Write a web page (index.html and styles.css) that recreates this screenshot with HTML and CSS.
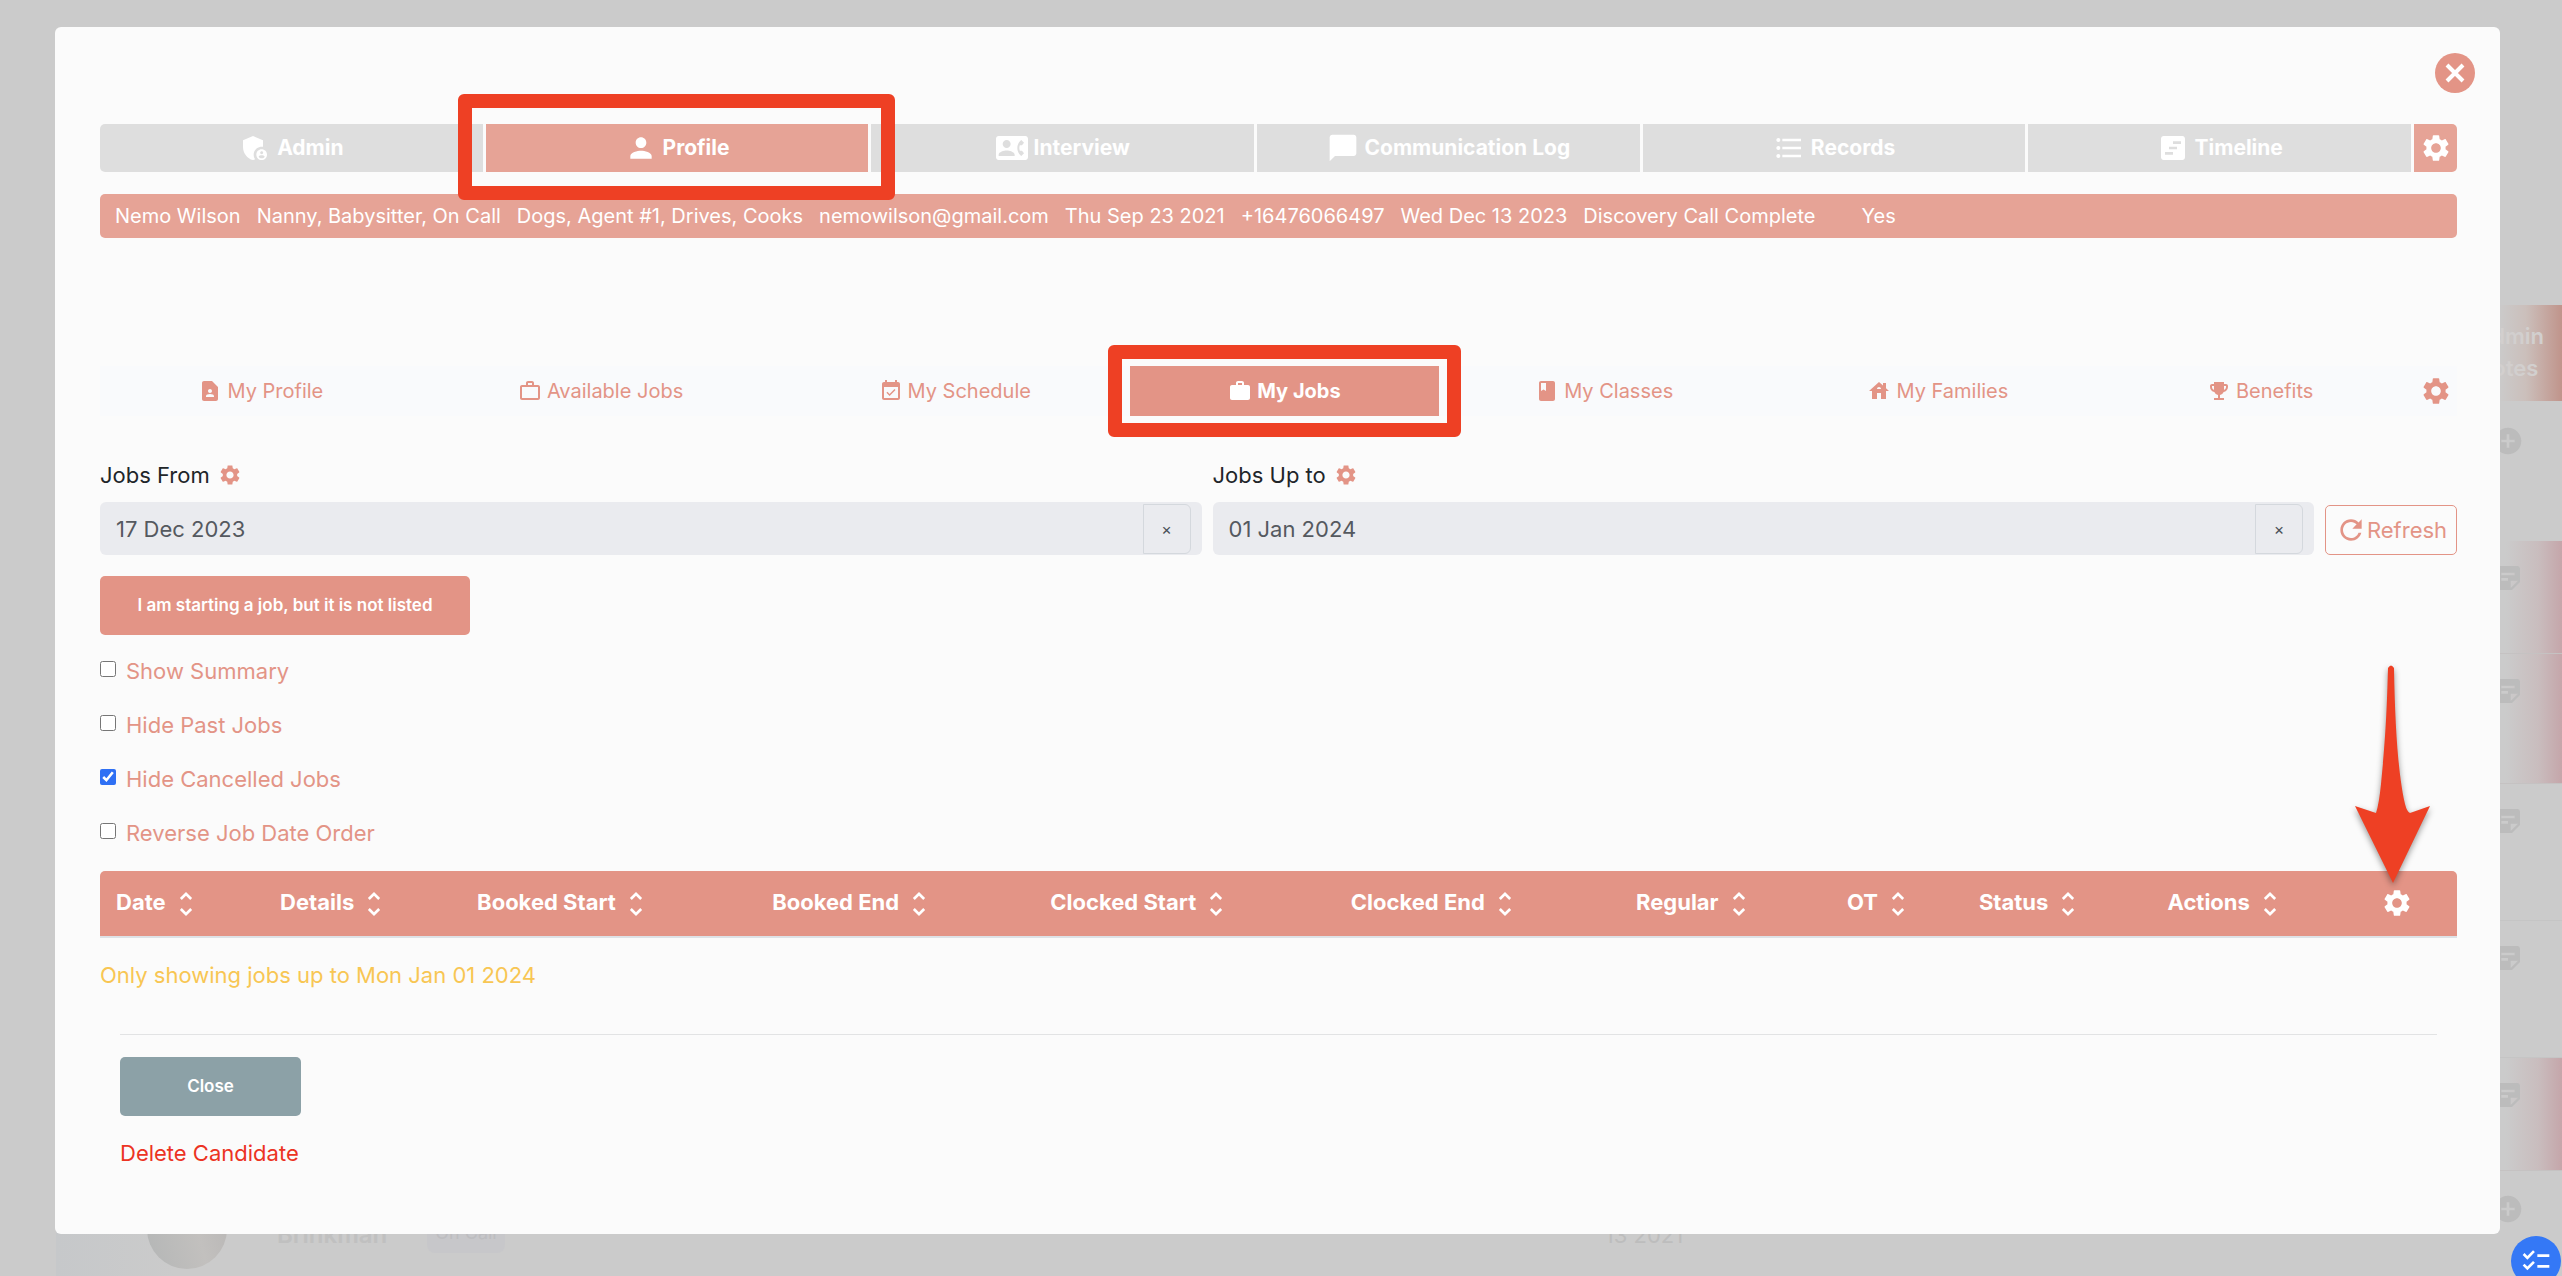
FILE: index.html
```html
<!DOCTYPE html>
<html lang="en">
<head>
    <meta charset="UTF-8">
    <meta name="viewport" content="width=device-width, initial-scale=1.0">
    <title>Candidate - My Jobs</title>
    <link rel="stylesheet" href="styles.css">
</head>
<body>
    <svg class="sprite" aria-hidden="true">
        <symbol id="gear" viewBox="0 0 24 24"><path d="M19.14 12.94c.04-.3.06-.61.06-.94 0-.32-.02-.64-.07-.94l2.03-1.58c.18-.14.23-.41.12-.61l-1.92-3.32c-.12-.22-.37-.29-.59-.22l-2.39.96c-.5-.38-1.03-.7-1.62-.94l-.36-2.54c-.04-.24-.24-.41-.48-.41h-3.84c-.24 0-.43.17-.47.41l-.36 2.54c-.59.24-1.13.57-1.62.94l-2.39-.96c-.22-.08-.47 0-.59.22L2.74 8.87c-.12.21-.08.47.12.61l2.03 1.58c-.05.3-.09.63-.09.94s.02.64.07.94l-2.03 1.58c-.18.14-.23.41-.12.61l1.92 3.32c.12.22.37.29.59.22l2.39-.96c.5.38 1.03.7 1.62.94l.36 2.54c.05.24.24.41.48.41h3.84c.24 0 .44-.17.47-.41l.36-2.54c.59-.24 1.13-.56 1.62-.94l2.39.96c.22.08.47 0 .59-.22l1.92-3.32c.12-.22.07-.47-.12-.61l-2.01-1.58zM12 15.6c-1.98 0-3.6-1.62-3.6-3.6s1.62-3.6 3.6-3.6 3.6 1.62 3.6 3.6-1.62 3.6-3.6 3.6z"/></symbol>
        <symbol id="shield" viewBox="0 0 24 24"><path d="M17 11c.34 0 .67.04 1 .09V6.27L10.5 3 3 6.27v4.91c0 4.54 3.2 8.79 7.5 9.82.55-.13 1.08-.32 1.6-.55-.69-.98-1.1-2.17-1.1-3.45 0-3.31 2.69-6 6-6z"/><path d="M17 13c-2.21 0-4 1.79-4 4s1.79 4 4 4 4-1.79 4-4-1.79-4-4-4zm0 1.38c.62 0 1.12.51 1.12 1.12s-.51 1.12-1.12 1.12-1.12-.51-1.12-1.12.5-1.12 1.12-1.12zm0 5.37c-.93 0-1.74-.46-2.24-1.17.05-.72 1.51-1.08 2.24-1.08s2.19.36 2.24 1.08c-.5.71-1.31 1.17-2.24 1.17z"/></symbol>
        <symbol id="person" viewBox="0 0 24 24"><path d="M12 12c2.21 0 4-1.79 4-4s-1.79-4-4-4-4 1.79-4 4 1.79 4 4 4zm0 2c-2.67 0-8 1.34-8 4v2h16v-2c0-2.66-5.33-4-8-4z"/></symbol>
        <symbol id="contact-phone" viewBox="0 0 24 24"><path d="M22 3H2C.9 3 0 3.9 0 5v14c0 1.1.9 2 2 2h20c1.1 0 1.99-.9 1.99-2L24 5c0-1.1-.9-2-2-2zM8 6c1.66 0 3 1.34 3 3s-1.34 3-3 3-3-1.34-3-3 1.34-3 3-3zm6 12H2v-1c0-2 4-3.1 6-3.1s6 1.1 6 3.1v1zm3.85-4h1.64L21 16l-1.99 1.99c-1.31-.98-2.28-2.38-2.73-3.99-.18-.64-.28-1.31-.28-2s.1-1.36.28-2c.45-1.62 1.42-3.01 2.73-3.99L21 8l-1.51 2h-1.64c-.22.63-.35 1.3-.35 2s.13 1.37.35 2z"/></symbol>
        <symbol id="chat" viewBox="0 0 24 24"><path d="M20 2H4c-1.1 0-2 .9-2 2v18l4-4h14c1.1 0 2-.9 2-2V4c0-1.1-.9-2-2-2z"/></symbol>
        <symbol id="list" viewBox="0 0 24 24"><path d="M4 10.5c-.83 0-1.5.67-1.5 1.5s.67 1.5 1.5 1.5 1.5-.67 1.5-1.5-.67-1.5-1.5-1.5zm0-6c-.83 0-1.5.67-1.5 1.5S3.17 7.5 4 7.5 5.5 6.83 5.5 6 4.83 4.5 4 4.5zm0 12c-.83 0-1.5.68-1.5 1.5s.68 1.5 1.5 1.5 1.5-.68 1.5-1.5-.67-1.5-1.5-1.5zM7 19h14v-2H7v2zm0-6h14v-2H7v2zm0-8v2h14V5H7z"/></symbol>
        <symbol id="timeline" viewBox="0 0 24 24"><path d="M19 3H5c-1.1 0-2 .9-2 2v14c0 1.1.9 2 2 2h14c1.1 0 2-.9 2-2V5c0-1.1-.9-2-2-2zm-7 14H6v-2h6v2zm3-4H9v-2h6v2zm3-4h-6V7h6v2z"/></symbol>
        <symbol id="contact-page" viewBox="0 0 24 24"><path d="M14 2H6c-1.1 0-2 .9-2 2v16c0 1.1.89 2 2 2h12c1.1 0 2-.9 2-2V8l-6-6zm-2 8c1.1 0 2 .9 2 2s-.9 2-2 2-2-.9-2-2 .9-2 2-2zm4 8H8v-.57c0-.81.48-1.53 1.22-1.85.85-.37 1.79-.58 2.78-.58.99 0 1.93.21 2.78.58.74.32 1.22 1.04 1.22 1.85V18z"/></symbol>
        <symbol id="work-outline" viewBox="0 0 24 24"><path d="M14 6V4h-4v2h4zM4 8v11h16V8H4zm16-2c1.11 0 2 .89 2 2v11c0 1.11-.89 2-2 2H4c-1.11 0-2-.89-2-2l.01-11c0-1.11.88-2 1.99-2h4V4c0-1.11.89-2 2-2h4c1.11 0 2 .89 2 2v2h4z"/></symbol>
        <symbol id="event" viewBox="0 0 24 24"><path d="M16.53 11.06L15.47 10l-4.88 4.88-2.12-2.12-1.06 1.06L10.59 17l5.94-5.94zM19 3h-1V1h-2v2H8V1H6v2H5c-1.11 0-1.99.9-1.99 2L3 19c0 1.1.89 2 2 2h14c1.1 0 2-.9 2-2V5c0-1.1-.9-2-2-2zm0 16H5V8h14v11z"/></symbol>
        <symbol id="work" viewBox="0 0 24 24"><path d="M20 6h-4V4c0-1.11-.89-2-2-2h-4c-1.11 0-2 .89-2 2v2H4c-1.11 0-1.99.89-1.99 2L2 19c0 1.11.89 2 2 2h16c1.11 0 2-.89 2-2V8c0-1.11-.89-2-2-2zm-6 0h-4V4h4v2z"/></symbol>
        <symbol id="class" viewBox="0 0 24 24"><path d="M18 2H6c-1.1 0-2 .9-2 2v16c0 1.1.9 2 2 2h12c1.1 0 2-.9 2-2V4c0-1.1-.9-2-2-2zM6 4h5v8l-2.5-1.5L6 12V4z"/></symbol>
        <symbol id="house" viewBox="0 0 24 24"><path d="M19 9.3V4h-3v2.6L12 3 2 12h3v8h5v-6h4v6h5v-8h3l-3-2.7zm-9 .7c0-1.1.9-2 2-2s2 .9 2 2h-4z"/></symbol>
        <symbol id="trophy" viewBox="0 0 24 24"><path d="M19 5h-2V3H7v2H5c-1.1 0-2 .9-2 2v1c0 2.55 1.92 4.63 4.39 4.94.63 1.5 1.98 2.63 3.61 2.96V19H7v2h10v-2h-4v-3.1c1.63-.33 2.98-1.46 3.61-2.96C19.08 12.63 21 10.55 21 8V7c0-1.1-.9-2-2-2zM5 8V7h2v3.82C5.84 10.4 5 9.3 5 8zm14 0c0 1.3-.84 2.4-2 2.82V7h2v1z"/></symbol>
        <symbol id="refresh" viewBox="0 0 24 24"><path d="M17.65 6.35C16.2 4.9 14.21 4 12 4c-4.42 0-7.99 3.58-7.99 8s3.57 8 7.99 8c3.73 0 6.84-2.55 7.73-6h-2.08c-.82 2.33-3.04 4-5.65 4-3.31 0-6-2.69-6-6s2.69-6 6-6c1.66 0 3.14.69 4.22 1.78L13 11h7V4l-2.35 2.35z"/></symbol>
        <symbol id="sort" viewBox="0 0 24 24"><path d="M12 5.83L15.17 9l1.41-1.41L12 3 7.41 7.59 8.83 9 12 5.83zm0 12.34L8.83 15l-1.41 1.41L12 21l4.59-4.59L15.17 15 12 18.17z"/></symbol>
        <symbol id="note" viewBox="0 0 24 24"><path d="M19 3H4.99C3.89 3 3 3.9 3 5l.01 14c0 1.1.89 2 1.99 2h10l6-6V5c0-1.1-.9-2-2-2zM7 8h10v2H7V8zm5 6H7v-2h5v2zm2 5.5V14h5.5L14 19.5z"/></symbol>
        <symbol id="add" viewBox="0 0 24 24"><path d="M12 2C6.48 2 2 6.48 2 12s4.48 10 10 10 10-4.48 10-10S17.52 2 12 2zm5 11h-4v4h-2v-4H7v-2h4V7h2v4h4v2z"/></symbol>
        <symbol id="checklist" viewBox="0 0 24 24"><path d="M22 7h-9v2h9V7zm0 8h-9v2h9v-2zM5.54 11L2 7.46l1.41-1.41 2.12 2.12 4.24-4.24 1.41 1.41L5.54 11zm0 8L2 15.46l1.41-1.41 2.12 2.12 4.24-4.24 1.41 1.41L5.54 19z"/></symbol>
    </svg>

    <!-- candidate list behind the dialog -->
    <div class="candidates">
        <div class="row row-head"><span class="notes-head">Admin<br>Notes</span></div>
        <div class="row row-first"><svg class="icon"><use href="#add"/></svg></div>
        <div class="row row-alert"><svg class="icon"><use href="#note"/></svg></div>
        <div class="row row-alert row-tall"><svg class="icon"><use href="#note"/></svg></div>
        <div class="row row-plain"><svg class="icon"><use href="#note"/></svg></div>
        <div class="row row-plain"><svg class="icon"><use href="#note"/></svg></div>
        <div class="row row-alert"><svg class="icon"><use href="#note"/></svg></div>
        <div class="row row-last">
            <span class="avatar"></span>
            <span class="name">Brinkman</span>
            <span class="tag">On Call</span>
            <span class="added">13 2021</span>
            <svg class="icon"><use href="#add"/></svg>
        </div>
    </div>

    <main class="modal">
        <button type="button" class="close-x" aria-label="Close dialog">
            <svg viewBox="0 0 40 40"><path d="M12 12l16 16M28 12L12 28"/></svg>
        </button>

        <nav class="tabs">
            <button type="button" class="tab"><svg class="icon"><use href="#shield"/></svg>Admin</button>
            <button type="button" class="tab active"><svg class="icon"><use href="#person"/></svg>Profile<span class="highlight"></span></button>
            <button type="button" class="tab"><svg class="icon"><use href="#contact-phone"/></svg>Interview</button>
            <button type="button" class="tab"><svg class="icon"><use href="#chat"/></svg>Communication Log</button>
            <button type="button" class="tab"><svg class="icon"><use href="#list"/></svg>Records</button>
            <button type="button" class="tab"><svg class="icon"><use href="#timeline"/></svg>Timeline</button>
            <button type="button" class="tab-gear" aria-label="Tab settings"><svg class="icon"><use href="#gear"/></svg></button>
        </nav>

        <div class="info">
            <span>Nemo Wilson</span>
            <span>Nanny, Babysitter, On Call</span>
            <span>Dogs, Agent #1, Drives, Cooks</span>
            <span>nemowilson@gmail.com</span>
            <span>Thu Sep 23 2021</span>
            <span>+16476066497</span>
            <span>Wed Dec 13 2023</span>
            <span>Discovery Call Complete</span>
            <span></span>
            <span>Yes</span>
        </div>

        <nav class="subtabs">
            <a href="#"><svg class="icon"><use href="#contact-page"/></svg>My Profile</a>
            <a href="#"><svg class="icon"><use href="#work-outline"/></svg>Available Jobs</a>
            <a href="#"><svg class="icon"><use href="#event"/></svg>My Schedule</a>
            <a href="#" class="active"><svg class="icon"><use href="#work"/></svg>My Jobs<span class="highlight"></span></a>
            <a href="#"><svg class="icon"><use href="#class"/></svg>My Classes</a>
            <a href="#"><svg class="icon"><use href="#house"/></svg>My Families</a>
            <a href="#"><svg class="icon"><use href="#trophy"/></svg>Benefits</a>
            <button type="button" class="sub-gear" aria-label="Menu settings"><svg class="icon"><use href="#gear"/></svg></button>
        </nav>

        <form class="filters">
            <div class="field">
                <label for="jobsFrom">Jobs From <svg class="icon"><use href="#gear"/></svg></label>
                <div class="date-box">
                    <input type="text" id="jobsFrom" value="17 Dec 2023">
                    <button type="button" class="clear" aria-label="Clear start date">×</button>
                </div>
            </div>
            <div class="field">
                <label for="jobsTo">Jobs Up to <svg class="icon"><use href="#gear"/></svg></label>
                <div class="date-box">
                    <input type="text" id="jobsTo" value="01 Jan 2024">
                    <button type="button" class="clear" aria-label="Clear end date">×</button>
                </div>
            </div>
            <button type="button" class="refresh"><svg class="icon"><use href="#refresh"/></svg>Refresh</button>
        </form>

        <button type="button" class="btn btn-start">I am starting a job, but it is not listed</button>

        <div class="options">
            <label><input type="checkbox">Show Summary</label>
            <label><input type="checkbox">Hide Past Jobs</label>
            <label><input type="checkbox" checked>Hide Cancelled Jobs</label>
            <label><input type="checkbox">Reverse Job Date Order</label>
        </div>

        <div class="jobs">
            <table>
                <thead>
                    <tr>
                        <th class="w-date">Date<svg class="icon"><use href="#sort"/></svg></th>
                        <th class="w-details">Details<svg class="icon"><use href="#sort"/></svg></th>
                        <th class="w-bstart">Booked Start<svg class="icon"><use href="#sort"/></svg></th>
                        <th class="w-bend">Booked End<svg class="icon"><use href="#sort"/></svg></th>
                        <th class="w-cstart">Clocked Start<svg class="icon"><use href="#sort"/></svg></th>
                        <th class="w-cend">Clocked End<svg class="icon"><use href="#sort"/></svg></th>
                        <th class="w-regular">Regular<svg class="icon"><use href="#sort"/></svg></th>
                        <th class="w-ot">OT<svg class="icon"><use href="#sort"/></svg></th>
                        <th class="w-status">Status<svg class="icon"><use href="#sort"/></svg></th>
                        <th class="w-actions">Actions<svg class="icon"><use href="#sort"/></svg></th>
                        <th class="w-gear"><button type="button" aria-label="Table settings"><svg class="icon"><use href="#gear"/></svg></button></th>
                    </tr>
                </thead>
            </table>
            <svg class="arrow" viewBox="0 0 76 220"><path d="M33 4Q36 -1 39 4C40 60 43 110 50 140Q52 148 55 149L75 142L38 219L0 142L21 149Q24 140 26 120C31 70 32 40 33 4z"/></svg>
        </div>

        <p class="notice">Only showing jobs up to Mon Jan 01 2024</p>

        <footer class="footer">
            <button type="button" class="btn btn-close">Close</button>
            <a href="#" class="delete">Delete Candidate</a>
        </footer>
    </main>

    <button type="button" class="tasks" aria-label="Tasks"><svg class="icon"><use href="#checklist"/></svg></button>
</body>
</html>
```

FILE: styles.css
```css
* {
    box-sizing: border-box;
}
body {
    margin: 0;
    height: 100vh;
    position: relative;
    overflow: hidden;
    background-color: #cbcbcb;
    font-family: Inter, "Open Sans", sans-serif;
    font-size: 22px;
    line-height: 32px;
    color: #212529;
}
button, input {
    font: inherit;
    color: inherit;
    border: none;
    margin: 0;
    padding: 0;
    background: none;
}
button {
    cursor: pointer;
}
a {
    text-decoration: none;
    color: inherit;
}
.sprite {
    display: none;
}
.icon {
    width: 32px;
    height: 32px;
    flex-shrink: 0;
    fill: currentColor;
}

/* page behind */
.candidates {
    padding-top: 305px;
    padding-left: 56px;
}
.row {
    display: flex;
    justify-content: flex-end;
    padding-top: 21px;
    padding-right: 38px;
    height: 113px;
    color: #bcbcbc;
}
.row-head {
    height: 96px;
    padding-top: 15px;
    padding-right: 18px;
    font-weight: 600;
    color: #d2cfce;
    background: linear-gradient(to left, #c0948b, #cbbfbb 36px, #cbcbcb 64px);
}
.row-first {
    height: 140px;
    padding-top: 24px;
}
.row-alert {
    background: linear-gradient(to left, #c5a6aa, #c9bdbe 24px, #cbcbcb 56px);
    border-bottom: 1px solid #c5c2c2;
}
.row-tall {
    height: 130px;
}
.row-plain {
    height: 137px;
    padding-top: 21px;
    border-bottom: 1px solid #c5c5c5;
}
.row-last {
    height: 140px;
    padding-top: 18px;
    align-items: flex-start;
    background: linear-gradient(to right, #c6c8ca, #cbcbcb 120px);
}
.row-last .icon {
    margin-top: 4px;
}
.avatar {
    width: 80px;
    height: 80px;
    margin-left: 91px;
    border-radius: 50%;
    background: linear-gradient(75deg, #b4b6b6, #c2c0be 60%, #b8b6b5);
}
.name {
    margin: 30px 40px 0 50px;
    font-size: 24px;
    font-weight: 600;
    color: #c0c0c0;
}
.tag {
    margin-top: 24px;
    padding: 4px 8px;
    border-radius: 8px;
    font-size: 18px;
    background-color: #c7c7ca;
    color: #bdbdc0;
}
.added {
    margin: 30px auto 0 1100px;
    color: #bdbdbd;
}

/* dialog */
.modal {
    position: absolute;
    top: 27px;
    left: 55px;
    right: 62px;
    padding: 97px 43px 65px 45px;
    background-color: #fbfbfb;
    border-radius: 6px;
}
.close-x {
    position: absolute;
    top: 26px;
    right: 25px;
    width: 40px;
    height: 40px;
    border-radius: 50%;
    background-color: #e39486;
}
.close-x svg {
    display: block;
    stroke: #fff;
    stroke-width: 4;
}
.tabs {
    display: flex;
    gap: 3px;
    height: 48px;
    border-radius: 5px;
}
.tab, .tab-gear {
    display: flex;
    align-items: center;
    justify-content: center;
    background-color: #dedede;
    color: #fff;
}
.tab {
    flex: 1;
    gap: 6px;
    position: relative;
    font-size: 21px;
    font-weight: 700;
}
.tab:first-child {
    border-radius: 5px 0 0 5px;
}
.tab.active, .tab-gear {
    background-color: #e6a396;
}
.tab-gear {
    width: 43px;
    border-radius: 0 5px 5px 0;
}
.highlight {
    position: absolute;
    z-index: 2;
    inset: -30px -27px -28px -28px;
    border: 14px solid #ee4024;
    border-radius: 6px;
    pointer-events: none;
}
.info {
    display: flex;
    gap: 16px;
    align-items: center;
    height: 44px;
    margin-top: 22px;
    padding: 0 15px;
    border-radius: 5px;
    background-color: #e6a396;
    color: #fff;
    font-size: 20px;
}
.info span:empty {
    width: 14px;
}
.subtabs {
    display: grid;
    grid-template-columns: 322fr 358fr 351fr 309fr 331fr 337fr 308fr 43px;
    height: 50px;
    margin-top: 128px;
    background-color: #f9fafc;
    color: #e39486;
    font-size: 20px;
}
.subtabs a, .sub-gear {
    display: flex;
    align-items: center;
    justify-content: center;
    gap: 5px;
}
.subtabs a .icon {
    width: 24px;
    height: 24px;
}
.subtabs a.active {
    position: relative;
    background-color: #e39486;
    color: #fff;
    font-weight: 700;
}
.subtabs .highlight {
    inset: -21px -22px;
}
.filters {
    display: flex;
    gap: 11px;
    align-items: flex-end;
    margin-top: 43px;
}
.field {
    flex: 1;
}
.field label {
    display: flex;
    align-items: center;
    gap: 8px;
    margin-bottom: 11px;
}
.field label .icon {
    width: 24px;
    height: 24px;
    color: #e39486;
}
.date-box {
    display: flex;
    align-items: center;
    height: 53px;
    padding-right: 11px;
    border-radius: 6px;
    background-color: #eaebef;
}
.date-box input {
    flex: 1;
    min-width: 0;
    padding-left: 16px;
    color: #55595f;
}
.clear {
    width: 48px;
    height: 50px;
    border: 1px solid #d4d8dd;
    border-radius: 0 6px 6px 0;
    font-size: 16px;
    color: #495057;
}
.refresh {
    display: flex;
    align-items: center;
    justify-content: center;
    width: 132px;
    height: 50px;
    border: 1px solid #e39486;
    border-radius: 5px;
    color: #e39486;
}
.btn {
    display: block;
    height: 59px;
    padding-bottom: 2px;
    border-radius: 5px;
    color: #fff;
    font-size: 17px;
    font-weight: 600;
}
.btn-start {
    width: 370px;
    margin-top: 21px;
    background-color: #e39486;
}
.options {
    display: grid;
    gap: 22px;
    margin: 20px 0 22px;
    color: #e39486;
}
.options label {
    display: flex;
    gap: 10px;
    width: max-content;
}
.options input {
    width: 16px;
    height: 16px;
    margin-top: 6px;
    accent-color: #2f70f4;
}
.jobs {
    position: relative;
}
table {
    width: 100%;
    table-layout: fixed;
    border-collapse: separate;
    border-spacing: 0;
    border-bottom: 2px solid #dee2e6;
}
th {
    height: 65px;
    padding: 0 0 2px 16px;
    background-color: #e39486;
    color: #fff;
    font-weight: 700;
    text-align: left;
    white-space: nowrap;
}
th:first-child {
    border-top-left-radius: 5px;
}
th:last-child {
    border-top-right-radius: 5px;
}
th .icon {
    margin-left: 4px;
    vertical-align: middle;
}
th button {
    display: block;
    margin: auto;
    height: 32px;
}
th button .icon {
    display: block;
    margin: 0;
}
.w-date { width: 6.96%; }
.w-details { width: 8.36%; }
.w-bstart { width: 12.52%; }
.w-bend { width: 11.8%; }
.w-cstart { width: 12.75%; }
.w-cend { width: 12.1%; }
.w-regular { width: 8.95%; }
.w-ot { width: 5.6%; }
.w-status { width: 8%; }
.w-actions { width: 7.2%; }
.arrow {
    position: absolute;
    right: 26px;
    bottom: 54px;
    width: 76px;
    height: 220px;
    fill: #ee4024;
    filter: drop-shadow(0 3px 3px rgba(0, 0, 0, 0.4));
}
.notice {
    margin: 21px 0 43px;
    color: #f8c653;
}
.footer {
    display: flex;
    flex-direction: column;
    align-items: flex-start;
    margin: 0 20px;
    padding-top: 22px;
    border-top: 1px solid #e2e3e4;
}
.btn-close {
    width: 181px;
    background-color: #8ca1a7;
}
.delete {
    margin-top: 21px;
    color: #ec3323;
}
.tasks {
    position: absolute;
    right: 1px;
    bottom: -10px;
    display: flex;
    align-items: center;
    justify-content: center;
    width: 50px;
    height: 50px;
    border-radius: 50%;
    background-color: #3478f6;
    color: #fff;
}
```
